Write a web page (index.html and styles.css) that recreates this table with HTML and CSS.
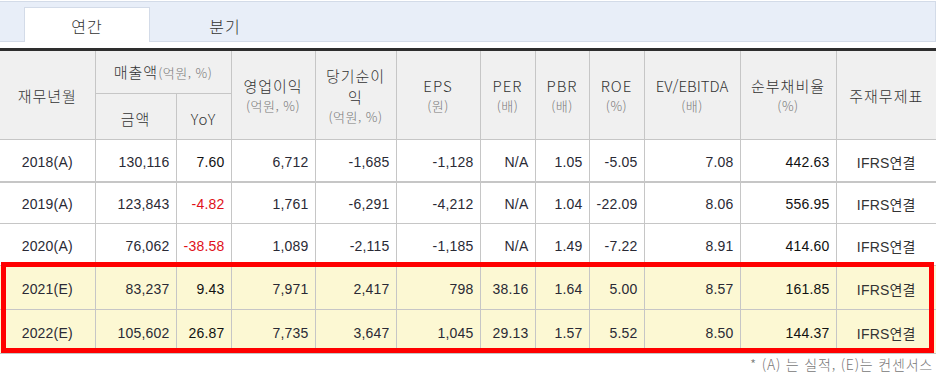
FILE: index.html
```html
<!DOCTYPE html>
<html lang="ko">
<head>
<meta charset="utf-8">
<link rel="stylesheet" href="styles.css">
</head>
<body>
<div class="tabs">
  <div class="tab active">연간</div>
  <div class="tab">분기</div>
</div>
<div class="table-wrap">
<table class="fin">
  <colgroup>
    <col style="width:95px"><col style="width:81px"><col style="width:55px"><col style="width:84px">
    <col style="width:81px"><col style="width:84px"><col style="width:55px"><col style="width:54px">
    <col style="width:55px"><col style="width:96px"><col style="width:96px"><col style="width:100px">
  </colgroup>
  <thead>
    <tr class="h1">
      <th rowspan="2" class="first">재무년월</th>
      <th colspan="2">매출액<span class="unit-inline">(억원, %)</span></th>
      <th rowspan="2">영업이익<span class="unit">(억원, %)</span></th>
      <th rowspan="2">당기순이익<span class="unit">(억원, %)</span></th>
      <th rowspan="2">EPS<span class="unit">(원)</span></th>
      <th rowspan="2">PER<span class="unit">(배)</span></th>
      <th rowspan="2">PBR<span class="unit">(배)</span></th>
      <th rowspan="2">ROE<span class="unit">(%)</span></th>
      <th rowspan="2" class="tight">EV/EBITDA<span class="unit">(배)</span></th>
      <th rowspan="2">순부채비율<span class="unit">(%)</span></th>
      <th rowspan="2" class="last">주재무제표</th>
    </tr>
    <tr class="h2">
      <th>금액</th>
      <th>YoY</th>
    </tr>
  </thead>
  <tbody>
    <tr class="r-first">
      <td class="c first">2018(A)</td><td>130,116</td><td class="yoy">7.60</td><td>6,712</td><td>-1,685</td><td>-1,128</td><td>N/A</td><td>1.05</td><td>-5.05</td><td>7.08</td><td class="debt">442.63</td><td class="c last">IFRS연결</td>
    </tr>
    <tr>
      <td class="c first">2019(A)</td><td>123,843</td><td class="yoy neg">-4.82</td><td>1,761</td><td>-6,291</td><td>-4,212</td><td>N/A</td><td>1.04</td><td>-22.09</td><td>8.06</td><td class="debt">556.95</td><td class="c last">IFRS연결</td>
    </tr>
    <tr>
      <td class="c first">2020(A)</td><td>76,062</td><td class="yoy neg">-38.58</td><td>1,089</td><td>-2,115</td><td>-1,185</td><td>N/A</td><td>1.49</td><td>-7.22</td><td>8.91</td><td class="debt">414.60</td><td class="c last">IFRS연결</td>
    </tr>
    <tr class="est">
      <td class="c first">2021(E)</td><td>83,237</td><td class="yoy">9.43</td><td>7,971</td><td>2,417</td><td>798</td><td>38.16</td><td>1.64</td><td>5.00</td><td>8.57</td><td class="debt">161.85</td><td class="c last">IFRS연결</td>
    </tr>
    <tr class="est">
      <td class="c first">2022(E)</td><td>105,602</td><td class="yoy">26.87</td><td>7,735</td><td>3,647</td><td>1,045</td><td>29.13</td><td>1.57</td><td>5.52</td><td>8.50</td><td class="debt">144.37</td><td class="c last">IFRS연결</td>
    </tr>
  </tbody>
</table>
<div class="highlight"></div>
</div>
<p class="note">* (A) 는 실적, (E)는 컨센서스</p>
</body>
</html>
```

FILE: styles.css
```css
html, body {
  margin: 0;
  padding: 0;
  background: #fff;
}
body {
  width: 936px;
  font-family: "Liberation Sans", "Noto Sans CJK KR", sans-serif;
  color: #333;
}
.tabs {
  margin-top: 1px;
  height: 39px;
  background: #e8eef8;
  border: 1px solid #d3dbe8;
  border-left: none;
  display: flex;
  align-items: flex-end;
  padding-left: 24px;
  gap: 12px;
}
.tab {
  width: 126px;
  height: 33px;
  box-sizing: border-box;
  display: flex;
  align-items: center;
  justify-content: center;
  font-family: "Noto Sans CJK KR", sans-serif;
  font-weight: 300;
  font-size: 16px;
  letter-spacing: 1px;
  color: #333;
  margin-bottom: -1px;
  padding-top: 1px;
}
.tab.active {
  background: #fff;
  border: 1px solid #d3dbe8;
  border-bottom: none;
  height: 35px;
}
.table-wrap {
  position: relative;
  margin-top: 6px;
}
.fin {
  width: 936px;
  border-collapse: collapse;
  table-layout: fixed;
  border-top: 3px solid #2e2e2e;
}
.fin th {
  background: #f0f0f0;
  font-weight: 300;
  font-family: "Noto Sans CJK KR", sans-serif;
  font-size: 15px;
  color: #333;
  border: 1px solid #c6c6c6;
  padding: 0 4px;
  line-height: 21px;
  letter-spacing: 1px;
}
.fin th.tight {
  letter-spacing: 0;
}
.fin tr.h1 th {
  height: 42px;
}
.fin tr.h2 th {
  height: 42px;
  padding-top: 3px;
}
.unit {
  display: block;
  font-family: "Noto Sans CJK KR", sans-serif;
  font-size: 13px;
  line-height: 19px;
  color: #7a7a7a;
  letter-spacing: 0.5px;
}
.unit-inline {
  font-family: "Noto Sans CJK KR", sans-serif;
  font-size: 13px;
  color: #7a7a7a;
  letter-spacing: 0.5px;
}
.fin .first {
  border-left: none;
}
.fin .last {
  border-right: none;
}
.fin td {
  height: 42px;
  border: 1px solid #c6c6c6;
  text-align: right;
  padding: 3px 6px 0 2px;
  box-sizing: border-box;
  font-size: 14px;
  letter-spacing: 0.2px;
  color: #2a2a35;
  white-space: nowrap;
}
.fin td.c {
  text-align: center;
  padding: 3px 2px 0;
}
.fin td.last {
  color: #333;
}
.fin tr.r-first td {
  border-bottom: 2px solid #c6c6c6;
  height: 42px;
}
.fin td.yoy {
  color: #111;
}
.fin td.yoy.neg {
  color: #e0101a;
}
.fin td.debt {
  color: #111;
}
.fin tr.est td {
  background: #fcf8d3;
  height: 44px;
}
.highlight {
  position: absolute;
  left: 1px;
  top: 214px;
  width: 933px;
  height: 91px;
  box-sizing: border-box;
  border: 5px solid #ff0000;
  pointer-events: none;
}
.note {
  margin: 3px 3px 0 0;
  text-align: right;
  font-family: "Noto Sans CJK KR", sans-serif;
  font-weight: 300;
  font-size: 14px;
  letter-spacing: 0.8px;
  color: #777;
  line-height: 15px;
}
```
